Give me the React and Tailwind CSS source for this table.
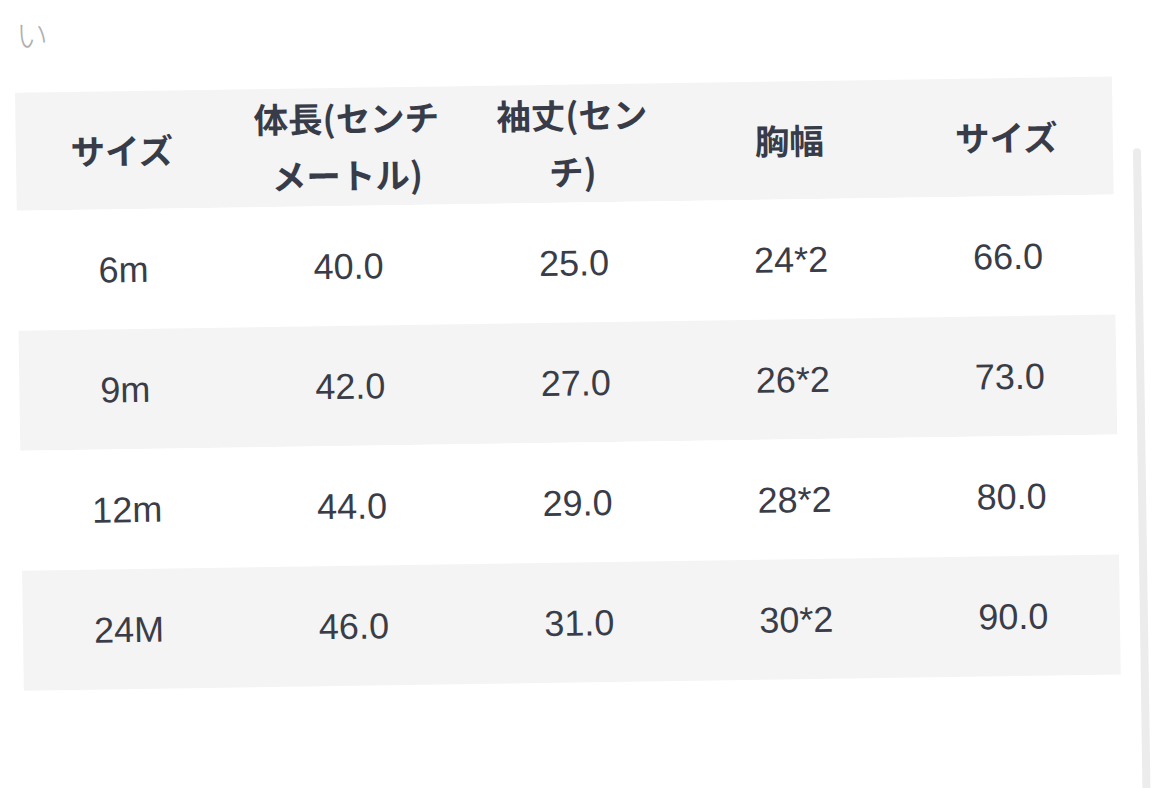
import React from "react";

const headers = [
  ["サイズ"],
  ["体長(センチ", "メートル)"],
  ["袖丈(セン", "チ)"],
  ["胸幅"],
  ["サイズ"],
];

const rows = [
  ["6m", "40.0", "25.0", "24*2", "66.0"],
  ["9m", "42.0", "27.0", "26*2", "73.0"],
  ["12m", "44.0", "29.0", "28*2", "80.0"],
  ["24M", "46.0", "31.0", "30*2", "90.0"],
];

const gridCls = "grid grid-cols-[212px_238px_213px_221px_213px]";

export default function App() {
  return (
    <div className="w-[1155px] h-[788px] overflow-hidden bg-white relative">
      <div
        className="pl-[16px] pt-[14px] h-[93px] text-[32px] leading-[38px] text-[#b0b0b0] font-light"
        style={{ fontFamily: '"Noto Sans CJK JP", sans-serif' }}
      >
        い
      </div>
      <div className="pl-[15px] origin-top-left rotate-[-0.85deg] flex items-start">
        <div className="w-[1097px] flex flex-col">
          <div
            className={`${gridCls} h-[118px] bg-[#f4f4f4] text-[#383c48] font-bold text-[34.5px] leading-[57px]`}
            style={{ fontFamily: '"Noto Sans CJK JP", sans-serif' }}
          >
            {headers.map((h, i) => (
              <div key={i} className="flex flex-col items-center justify-center text-center pb-[2px]">
                {h.map((line, j) => (
                  <span key={j}>{line}</span>
                ))}
              </div>
            ))}
          </div>
          {rows.map((r, i) => (
            <div
              key={i}
              className={`${gridCls} h-[120px] ${i % 2 === 1 ? "bg-[#f4f4f4]" : "bg-white"} text-[#3a3d48] text-[36px]`}
              style={{ fontFamily: '"Liberation Sans", Arial, sans-serif' }}
            >
              {r.map((c, j) => (
                <div key={j} className="flex items-center justify-center pt-[2px]">
                  {c}
                </div>
              ))}
            </div>
          ))}
        </div>
        <div className="ml-[20px] mt-[72px] w-[8px] h-[720px] rounded-full bg-[#ececec]" />
      </div>
    </div>
  );
}
